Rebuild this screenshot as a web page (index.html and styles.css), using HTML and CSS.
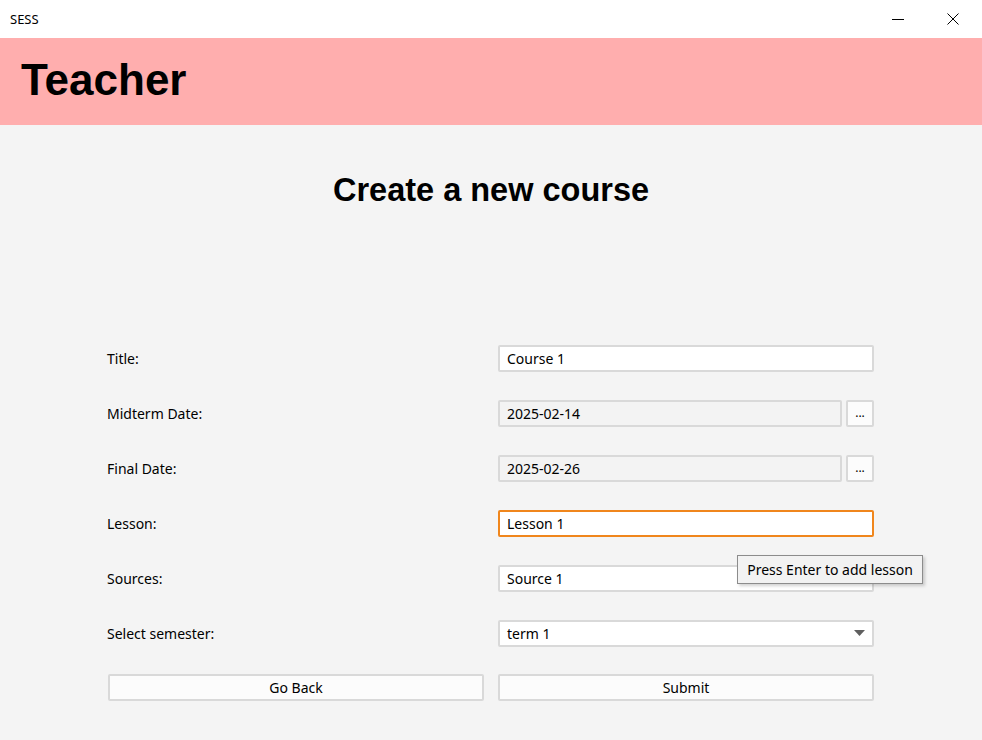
FILE: index.html
```html
<!DOCTYPE html>
<html>
<head>
<meta charset="utf-8">
<link rel="stylesheet" href="styles.css">
</head>
<body>
<div class="window">
  <div class="titlebar">
    <span class="app-name">SESS</span>
    <div class="win-controls">
      <span class="win-btn">
        <svg width="12" height="12" viewBox="0 0 12 12"><path d="M0 6.5H12" stroke="#000" stroke-width="1"/></svg>
      </span>
      <span class="win-btn">
        <svg width="12" height="12" viewBox="0 0 12 12"><path d="M0.5 0.5L11.5 11.5M11.5 0.5L0.5 11.5" stroke="#000" stroke-width="1"/></svg>
      </span>
    </div>
  </div>
  <header class="header"><h1 class="role">Teacher</h1></header>
  <main class="content">
    <h2 class="page-title">Create a new course</h2>
    <div class="form">
      <label class="label">Title:</label>
      <div class="field">Course 1</div>

      <label class="label">Midterm Date:</label>
      <div class="date-row">
        <div class="field readonly">2025-02-14</div>
        <div class="dots-btn">...</div>
      </div>

      <label class="label">Final Date:</label>
      <div class="date-row">
        <div class="field readonly">2025-02-26</div>
        <div class="dots-btn">...</div>
      </div>

      <label class="label">Lesson:</label>
      <div class="field focused">Lesson 1</div>

      <label class="label">Sources:</label>
      <div class="tip-anchor">
        <div class="field">Source 1</div>
        <div class="tooltip">Press Enter to add lesson</div>
      </div>

      <label class="label">Select semester:</label>
      <div class="field select">
        <span>term 1</span>
        <svg width="11" height="6" viewBox="0 0 11 6"><path d="M0 0H11L5.5 6Z" fill="#5f5f5f"/></svg>
      </div>
    </div>
    <div class="actions">
      <div class="btn">Go Back</div>
      <div class="btn">Submit</div>
    </div>
  </main>
</div>
</body>
</html>
```

FILE: styles.css
```css
html, body {
  margin: 0;
  padding: 0;
}
body {
  width: 982px;
  height: 740px;
  overflow: hidden;
  background: #f4f4f4;
  font-family: "Noto Sans", "Open Sans", sans-serif;
  color: #000;
}
.window {
  display: flex;
  flex-direction: column;
  height: 740px;
}
.titlebar {
  height: 38px;
  background: #fff;
  display: flex;
  align-items: center;
  justify-content: space-between;
  padding-left: 10px;
  box-sizing: border-box;
}
.app-name {
  font-size: 13px;
  margin-top: -1px;
}
.win-controls {
  display: flex;
  height: 100%;
}
.win-btn {
  width: 55px;
  display: flex;
  align-items: center;
  justify-content: center;
}
.win-btn:first-child {
  padding-left: 2px;
  padding-bottom: 1px;
}
.win-btn:last-child {
  padding-right: 2px;
  padding-bottom: 1px;
}
.header {
  height: 87px;
  background: #ffaeae;
  display: flex;
  align-items: center;
  padding-left: 21px;
}
.role {
  margin: 0;
  font-family: "Liberation Sans", Arial, sans-serif;
  font-weight: bold;
  font-size: 44px;
  line-height: 1;
  margin-top: -4px;
}
.content {
  flex: 1;
  display: flex;
  flex-direction: column;
}
.page-title {
  margin: 46px 0 0;
  text-align: center;
  font-family: "Liberation Sans", Arial, sans-serif;
  font-weight: bold;
  font-size: 32.5px;
  line-height: 38px;
  height: 38px;
}
.form {
  margin-top: 136px;
  margin-left: 107px;
  display: grid;
  grid-template-columns: 391px 376px;
  grid-auto-rows: 27px;
  row-gap: 28px;
  align-items: center;
}
.label {
  font-size: 14px;
  margin-top: -1px;
}
.field {
  height: 27px;
  box-sizing: border-box;
  background: #fff;
  border: 2px solid #d9d9d9;
  border-radius: 2px;
  padding-left: 7px;
  display: flex;
  align-items: center;
  font-size: 14px;
  padding-bottom: 1px;
}
.field.readonly {
  background: #f3f3f3;
  flex: 1;
}
.field.focused {
  border-color: #f0861c;
}
.date-row {
  display: flex;
  gap: 4px;
}
.dots-btn {
  width: 28px;
  height: 27px;
  box-sizing: border-box;
  background: #fcfcfc;
  border: 2px solid #d9d9d9;
  border-radius: 2px;
  font-size: 12px;
  display: flex;
  align-items: center;
  justify-content: center;
  padding-bottom: 3px;
}
.tip-anchor {
  position: relative;
}
.tooltip {
  position: absolute;
  left: 239px;
  top: -10px;
  width: 186px;
  height: 29px;
  box-sizing: border-box;
  background: #f2f2f2;
  border: 1px solid #8c8c8c;
  box-shadow: 2px 2px 3px rgba(0,0,0,0.18);
  font-size: 14px;
  display: flex;
  align-items: center;
  justify-content: center;
  white-space: nowrap;
  padding-bottom: 1px;
}
.field.select {
  justify-content: space-between;
  padding-right: 7px;
}
.actions {
  margin-top: 27px;
  margin-left: 108px;
  display: grid;
  grid-template-columns: 376px 376px;
  column-gap: 14px;
}
.btn {
  height: 27px;
  box-sizing: border-box;
  background: #fcfcfc;
  border: 2px solid #d9d9d9;
  border-radius: 2px;
  display: flex;
  align-items: center;
  justify-content: center;
  font-size: 14px;
  padding-bottom: 1px;
}
```
